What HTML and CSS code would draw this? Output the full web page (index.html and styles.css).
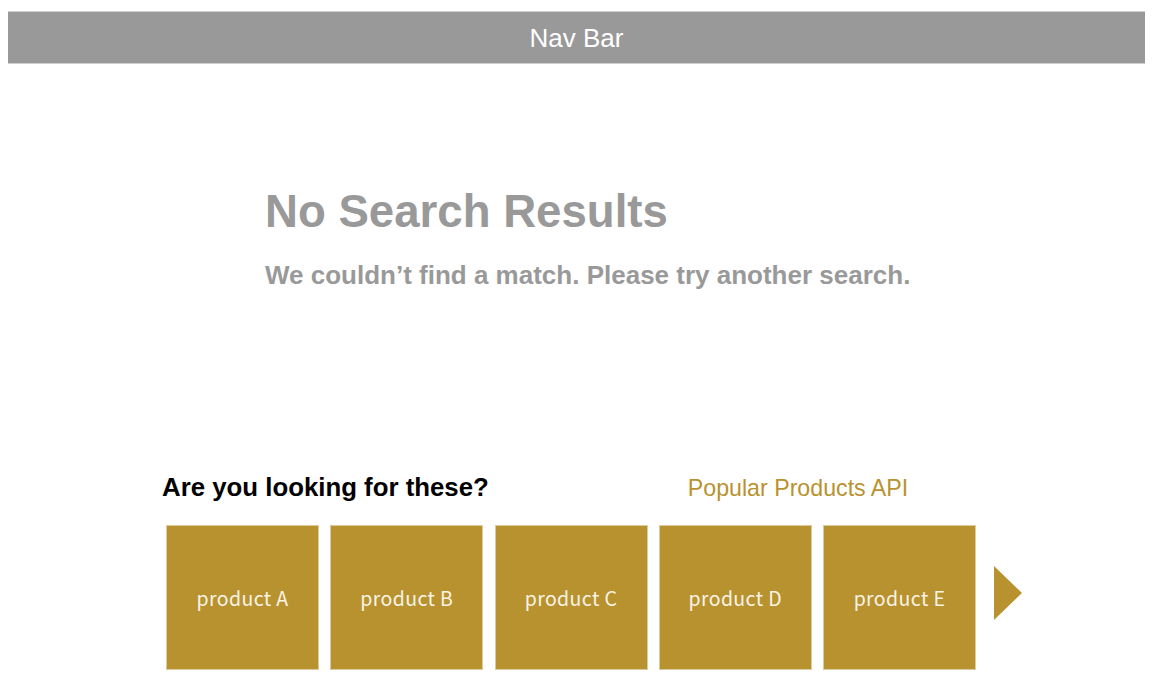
FILE: index.html
```html
<!DOCTYPE html>
<html lang="en">
<head>
<meta charset="utf-8">
<title>No Search Results</title>
<link rel="stylesheet" href="styles.css">
</head>
<body>
<header class="navbar">Nav Bar</header>
<main class="content">
  <section class="empty">
    <h1 class="empty-title">No Search Results</h1>
    <p class="empty-text">We couldn’t find a match. Please try another search.</p>
  </section>
  <section class="suggest">
    <div class="suggest-head">
      <h2 class="suggest-title">Are you looking for these?</h2>
      <span class="suggest-api">Popular Products API</span>
    </div>
    <div class="products">
      <div class="product">product A</div>
      <div class="product">product B</div>
      <div class="product">product C</div>
      <div class="product">product D</div>
      <div class="product">product E</div>
      <div class="next" aria-label="next"></div>
    </div>
  </section>
</main>
</body>
</html>
```
FILE: styles.css
```css
html, body {
  margin: 0;
  padding: 0;
  background: #fff;
}
body {
  font-family: "Liberation Sans", Arial, sans-serif;
}
.navbar {
  margin: 11px 9px 0 8px;
  height: 51px;
  background: #999;
  border-top: 1px solid #cfcfcf;
  border-bottom: 1px solid #cfcfcf;
  color: #fff;
  font-size: 26px;
  line-height: 53px;
  text-align: center;
}
.content {
  display: flex;
  flex-direction: column;
}
.empty {
  padding-left: 265px;
  padding-top: 122px;
}
.empty-title {
  margin: 0;
  font-size: 45.6px;
  font-weight: bold;
  color: #999;
  line-height: 52px;
}
.empty-text {
  margin: 22px 0 0;
  font-size: 26px;
  font-weight: bold;
  color: #999;
  line-height: 30px;
}
.suggest {
  padding-left: 162px;
  margin-top: 182px;
}
.suggest-head {
  display: flex;
  align-items: baseline;
}
.suggest-title {
  margin: 0;
  font-size: 25.8px;
  font-weight: bold;
  color: #000;
  line-height: 30px;
}
.suggest-api {
  margin-left: 199px;
  font-size: 23.2px;
  color: #b8922f;
}
.products {
  display: flex;
  align-items: center;
  gap: 11.25px;
  margin-top: 23px;
  padding-left: 4px;
}
.product {
  box-sizing: border-box;
  width: 153px;
  height: 145px;
  background: #b8922f;
  border: 1px solid #dccb9e;
  color: #faf4e6;
  font-family: "Noto Sans CJK JP", "Noto Sans", sans-serif;
  font-weight: 400;
  font-size: 19.5px;
  letter-spacing: 0.4px;
  display: flex;
  align-items: center;
  justify-content: center;
}
.next {
  width: 0;
  height: 0;
  margin-left: 7px;
  margin-top: -9px;
  border-top: 27px solid transparent;
  border-bottom: 27px solid transparent;
  border-left: 28px solid #b8922f;
}
```
